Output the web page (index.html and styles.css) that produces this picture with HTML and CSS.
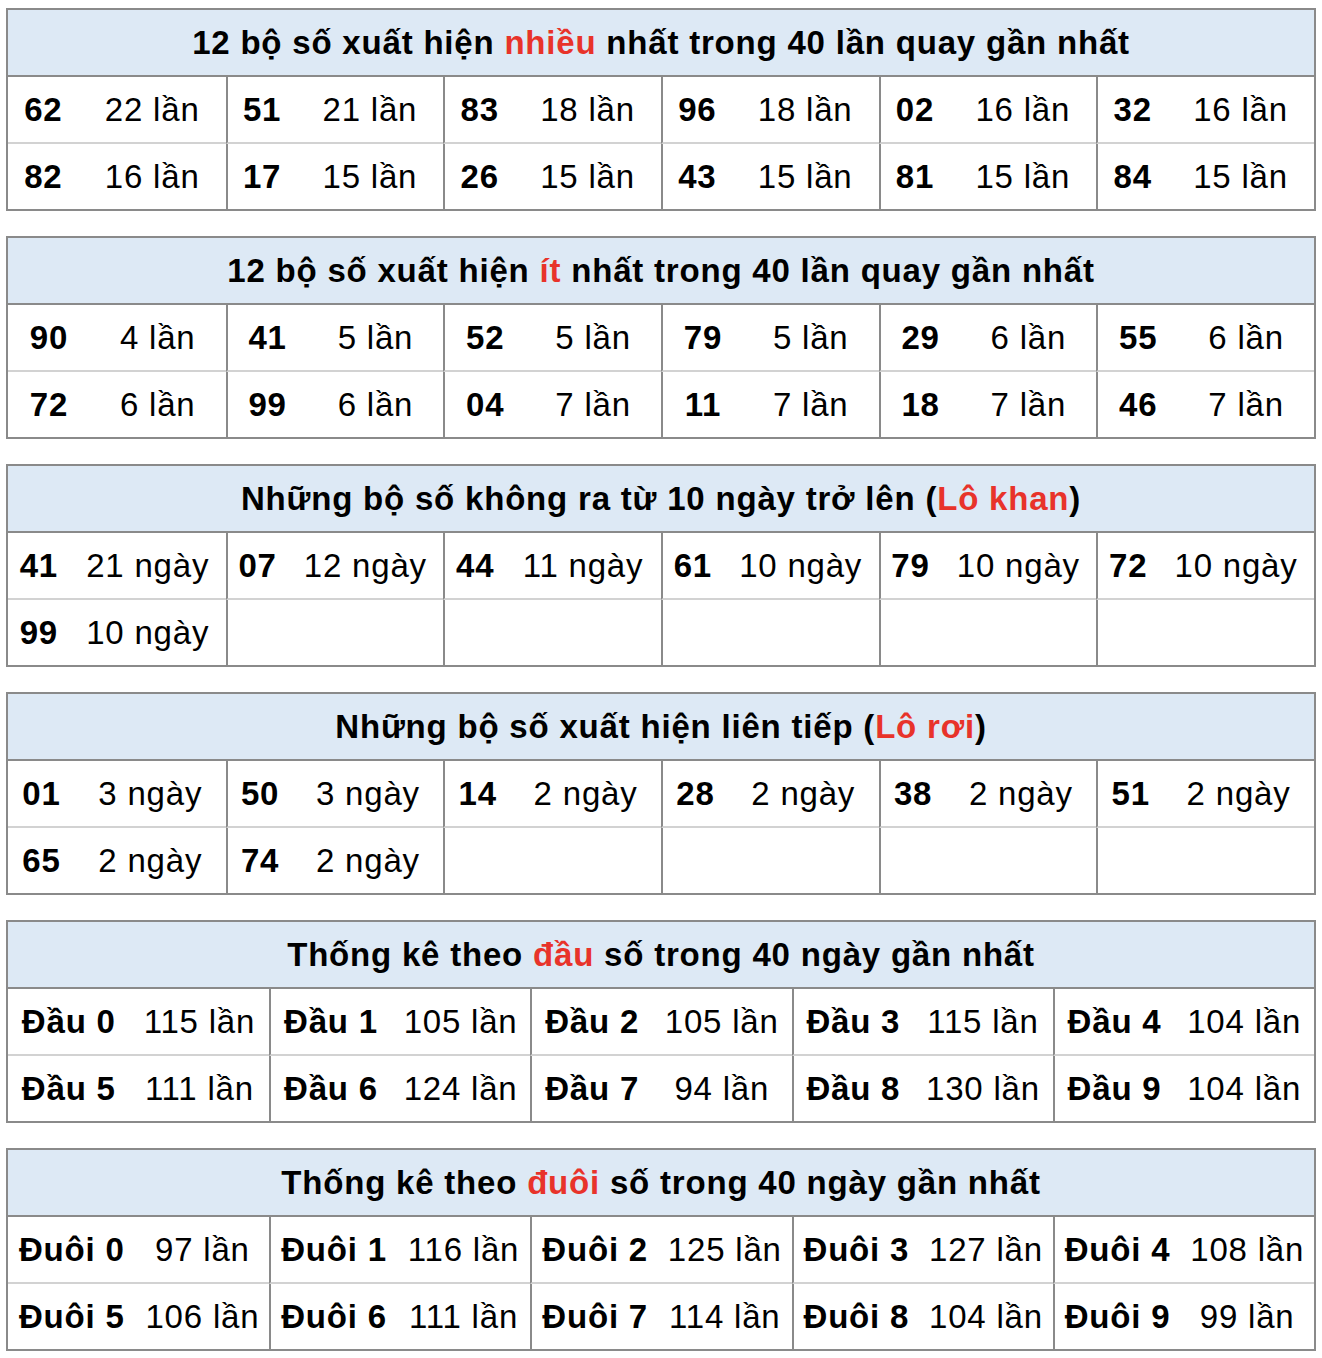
FILE: index.html
```html
<!DOCTYPE html>
<html lang="vi">
<head>
<meta charset="utf-8">
<title>Thống kê lô tô</title>
<link rel="stylesheet" href="styles.css">
</head>
<body>
<main class="stats">

<table class="stat t-most">
  <colgroup><col class="n"><col class="c"><col class="n"><col class="c"><col class="n"><col class="c"><col class="n"><col class="c"><col class="n"><col class="c"><col class="n"><col class="c"></colgroup>
  <thead><tr><th colspan="12">12 bộ số xuất hiện <span class="hl">nhiều</span> nhất trong 40 lần quay gần nhất</th></tr></thead>
  <tbody>
    <tr class="r1"><td class="num first">62</td><td class="cnt">22 lần</td><td class="num">51</td><td class="cnt">21 lần</td><td class="num">83</td><td class="cnt">18 lần</td><td class="num">96</td><td class="cnt">18 lần</td><td class="num">02</td><td class="cnt">16 lần</td><td class="num">32</td><td class="cnt">16 lần</td></tr>
    <tr><td class="num first">82</td><td class="cnt">16 lần</td><td class="num">17</td><td class="cnt">15 lần</td><td class="num">26</td><td class="cnt">15 lần</td><td class="num">43</td><td class="cnt">15 lần</td><td class="num">81</td><td class="cnt">15 lần</td><td class="num">84</td><td class="cnt">15 lần</td></tr>
  </tbody>
</table>

<table class="stat t-least">
  <colgroup><col class="n"><col class="c"><col class="n"><col class="c"><col class="n"><col class="c"><col class="n"><col class="c"><col class="n"><col class="c"><col class="n"><col class="c"></colgroup>
  <thead><tr><th colspan="12">12 bộ số xuất hiện <span class="hl">ít</span> nhất trong 40 lần quay gần nhất</th></tr></thead>
  <tbody>
    <tr class="r1"><td class="num first">90</td><td class="cnt">4 lần</td><td class="num">41</td><td class="cnt">5 lần</td><td class="num">52</td><td class="cnt">5 lần</td><td class="num">79</td><td class="cnt">5 lần</td><td class="num">29</td><td class="cnt">6 lần</td><td class="num">55</td><td class="cnt">6 lần</td></tr>
    <tr><td class="num first">72</td><td class="cnt">6 lần</td><td class="num">99</td><td class="cnt">6 lần</td><td class="num">04</td><td class="cnt">7 lần</td><td class="num">11</td><td class="cnt">7 lần</td><td class="num">18</td><td class="cnt">7 lần</td><td class="num">46</td><td class="cnt">7 lần</td></tr>
  </tbody>
</table>

<table class="stat t-khan">
  <colgroup><col class="n"><col class="c"><col class="n"><col class="c"><col class="n"><col class="c"><col class="n"><col class="c"><col class="n"><col class="c"><col class="n"><col class="c"></colgroup>
  <thead><tr><th colspan="12">Những bộ số không ra từ 10 ngày trở lên (<span class="hl">Lô khan</span>)</th></tr></thead>
  <tbody>
    <tr class="r1"><td class="num first">41</td><td class="cnt">21 ngày</td><td class="num">07</td><td class="cnt">12 ngày</td><td class="num">44</td><td class="cnt">11 ngày</td><td class="num">61</td><td class="cnt">10 ngày</td><td class="num">79</td><td class="cnt">10 ngày</td><td class="num">72</td><td class="cnt">10 ngày</td></tr>
    <tr><td class="num first">99</td><td class="cnt">10 ngày</td><td class="num"></td><td class="cnt"></td><td class="num"></td><td class="cnt"></td><td class="num"></td><td class="cnt"></td><td class="num"></td><td class="cnt"></td><td class="num"></td><td class="cnt"></td></tr>
  </tbody>
</table>

<table class="stat t-roi">
  <colgroup><col class="n"><col class="c"><col class="n"><col class="c"><col class="n"><col class="c"><col class="n"><col class="c"><col class="n"><col class="c"><col class="n"><col class="c"></colgroup>
  <thead><tr><th colspan="12">Những bộ số xuất hiện liên tiếp (<span class="hl">Lô rơi</span>)</th></tr></thead>
  <tbody>
    <tr class="r1"><td class="num first">01</td><td class="cnt">3 ngày</td><td class="num">50</td><td class="cnt">3 ngày</td><td class="num">14</td><td class="cnt">2 ngày</td><td class="num">28</td><td class="cnt">2 ngày</td><td class="num">38</td><td class="cnt">2 ngày</td><td class="num">51</td><td class="cnt">2 ngày</td></tr>
    <tr><td class="num first">65</td><td class="cnt">2 ngày</td><td class="num">74</td><td class="cnt">2 ngày</td><td class="num"></td><td class="cnt"></td><td class="num"></td><td class="cnt"></td><td class="num"></td><td class="cnt"></td><td class="num"></td><td class="cnt"></td></tr>
  </tbody>
</table>

<table class="stat t-dau">
  <colgroup><col class="n"><col class="c"><col class="n"><col class="c"><col class="n"><col class="c"><col class="n"><col class="c"><col class="n"><col class="c"></colgroup>
  <thead><tr><th colspan="10">Thống kê theo <span class="hl">đầu</span> số trong 40 ngày gần nhất</th></tr></thead>
  <tbody>
    <tr class="r1"><td class="num first">Đầu 0</td><td class="cnt">115 lần</td><td class="num">Đầu 1</td><td class="cnt">105 lần</td><td class="num">Đầu 2</td><td class="cnt">105 lần</td><td class="num">Đầu 3</td><td class="cnt">115 lần</td><td class="num">Đầu 4</td><td class="cnt">104 lần</td></tr>
    <tr><td class="num first">Đầu 5</td><td class="cnt">111 lần</td><td class="num">Đầu 6</td><td class="cnt">124 lần</td><td class="num">Đầu 7</td><td class="cnt">94 lần</td><td class="num">Đầu 8</td><td class="cnt">130 lần</td><td class="num">Đầu 9</td><td class="cnt">104 lần</td></tr>
  </tbody>
</table>

<table class="stat t-duoi">
  <colgroup><col class="n"><col class="c"><col class="n"><col class="c"><col class="n"><col class="c"><col class="n"><col class="c"><col class="n"><col class="c"></colgroup>
  <thead><tr><th colspan="10">Thống kê theo <span class="hl">đuôi</span> số trong 40 ngày gần nhất</th></tr></thead>
  <tbody>
    <tr class="r1"><td class="num first">Đuôi 0</td><td class="cnt">97 lần</td><td class="num">Đuôi 1</td><td class="cnt">116 lần</td><td class="num">Đuôi 2</td><td class="cnt">125 lần</td><td class="num">Đuôi 3</td><td class="cnt">127 lần</td><td class="num">Đuôi 4</td><td class="cnt">108 lần</td></tr>
    <tr><td class="num first">Đuôi 5</td><td class="cnt">106 lần</td><td class="num">Đuôi 6</td><td class="cnt">111 lần</td><td class="num">Đuôi 7</td><td class="cnt">114 lần</td><td class="num">Đuôi 8</td><td class="cnt">104 lần</td><td class="num">Đuôi 9</td><td class="cnt">99 lần</td></tr>
  </tbody>
</table>

</main>
</body>
</html>
```

FILE: styles.css
```css
html, body {
  background: #ffffff;
}
body {
  margin: 8px 6px;
  font-family: "Liberation Sans", Arial, sans-serif;
  color: #000;
}
.stats {
  display: flex;
  flex-direction: column;
  gap: 25px;
}
.stat {
  width: 100%;
  table-layout: fixed;
  border-collapse: separate;
  border-spacing: 0;
  border: 2px solid #8a8a8a;
}
.stat th {
  height: 65px;
  padding: 0;
  background: #dde9f5;
  border-bottom: 2px solid #8a8a8a;
  font-size: 33px;
  letter-spacing: 0.8px;
  font-weight: bold;
  text-align: center;
  vertical-align: middle;
  white-space: nowrap;
}
.hl {
  color: #e8332a;
}
.stat td {
  height: 65px;
  padding: 0;
  text-align: center;
  vertical-align: middle;
  font-size: 33px;
  letter-spacing: 0.8px;
  white-space: nowrap;
}
.stat tr.r1 td {
  border-bottom: 2px solid #d2d2d2;
}
.stat td.num {
  font-weight: bold;
  border-left: 2px solid #8a8a8a;
}
.stat td.num.first {
  border-left: none;
}

/* column proportions per table */
.t-most .n { width: 5.42%; }
.t-most .c { width: 11.25%; }
.t-least .n { width: 6.27%; }
.t-least .c { width: 10.4%; }
.t-khan .n { width: 4.73%; }
.t-khan .c { width: 11.94%; }
.t-roi .n { width: 5.12%; }
.t-roi .c { width: 11.55%; }
.t-dau .n { width: 9.31%; }
.t-dau .c { width: 10.69%; }
.t-duoi .n { width: 9.77%; }
.t-duoi .c { width: 10.23%; }
```
